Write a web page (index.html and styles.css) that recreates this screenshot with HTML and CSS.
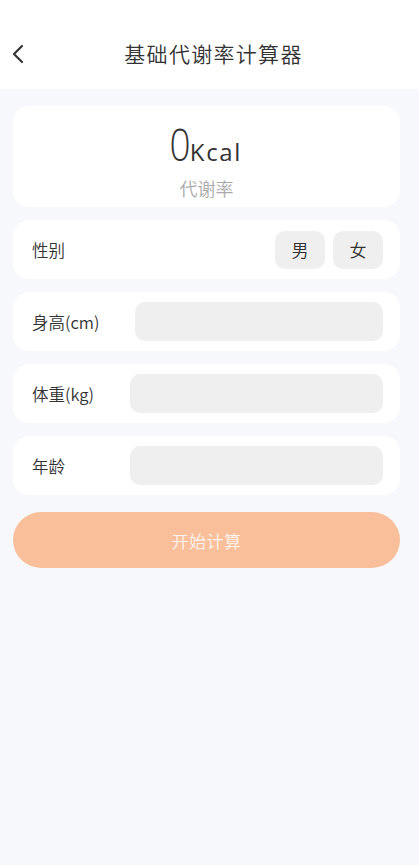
FILE: index.html
```html
<!DOCTYPE html>
<html lang="zh-CN">
<head>
<meta charset="utf-8">
<link rel="stylesheet" href="styles.css">
</head>
<body>
<div class="page">
  <header class="header">
    <svg class="back" width="20" height="20" viewBox="0 0 20 20"><path d="M10 2 L2 10 L10 18" fill="none" stroke="#333" stroke-width="2.2" stroke-linecap="round" stroke-linejoin="round"/></svg>
    <div class="title">基础代谢率计算器</div>
  </header>
  <main class="content">
    <section class="card result">
      <div class="value"><span class="num">0</span><span class="unit">Kcal</span></div>
      <div class="caption">代谢率</div>
    </section>
    <section class="card row">
      <span class="label">性别</span>
      <div class="gender">
        <span class="gbtn">男</span>
        <span class="gbtn">女</span>
      </div>
    </section>
    <section class="card row">
      <span class="label lw1">身高(cm)</span>
      <span class="input"></span>
    </section>
    <section class="card row">
      <span class="label lw2">体重(kg)</span>
      <span class="input"></span>
    </section>
    <section class="card row">
      <span class="label lw2">年龄</span>
      <span class="input"></span>
    </section>
    <button class="calc">开始计算</button>
  </main>
</div>
</body>
</html>
```
FILE: styles.css
```css
* { box-sizing: border-box; }
html, body { margin: 0; padding: 0; }
body {
  font-family: "Noto Sans CJK SC", "Noto Sans", sans-serif;
  background: #f7f8fc;
  color: #333;
  width: 419px;
  height: 865px;
}
.page { min-height: 865px; background: #f7f8fc; }
.header {
  height: 89px;
  background: #fff;
  position: relative;
  display: flex;
  align-items: flex-start;
  justify-content: center;
  padding-top: 43px;
}
.back { position: absolute; left: 12px; top: 44px; }
.title {
  font-size: 21px;
  font-weight: 350;
  letter-spacing: 1.3px;
  color: #333;
  line-height: 1;
  margin-left: 8px;
}
.content {
  padding: 17px 19px 0 13px;
  display: flex;
  flex-direction: column;
  gap: 13px;
}
.card {
  background: #fff;
  border-radius: 16px;
}
.result {
  height: 101px;
  display: flex;
  flex-direction: column;
  align-items: center;
  padding-top: 15px;
}
.value { line-height: 1; display: flex; align-items: baseline; margin-left: -6px; }
.num {
  display: inline-block;
  font-family: "Open Sans", sans-serif;
  font-weight: 300;
  font-size: 45px;
  color: #333;
  transform: scaleX(0.82);
  transform-origin: right center;
}
.unit {
  font-family: "Open Sans", sans-serif;
  font-size: 24px;
  letter-spacing: 1.6px;
  color: #333;
  margin-left: -1px;
}
.caption {
  font-size: 18px;
  font-weight: 350;
  color: #aaa;
  margin-top: 13px;
  line-height: 1;
}
.row {
  height: 59px;
  display: flex;
  align-items: center;
  padding: 0 17px 0 19px;
}
.label {
  font-size: 16.5px;
  font-weight: 350;
  color: #333;
  flex: none;
}
.lw1 { width: 103px; }
.lw2 { width: 98px; }
.gender { margin-left: auto; display: flex; gap: 8px; }
.gbtn {
  width: 50px;
  height: 38px;
  border-radius: 10px;
  background: #efefef;
  display: flex;
  align-items: center;
  justify-content: center;
  font-size: 17px;
  font-weight: 350;
  color: #333;
}
.input {
  flex: 1;
  height: 39px;
  border-radius: 10px;
  background: #efefef;
}
.calc {
  margin-top: 4px;
  height: 56px;
  border: none;
  border-radius: 28px;
  background: #f9bf9a;
  color: #fff5ee;
  font-family: "Noto Sans CJK SC", sans-serif;
  font-size: 17px;
  font-weight: 350;
  letter-spacing: 0.5px;
  padding: 0;
}
```
